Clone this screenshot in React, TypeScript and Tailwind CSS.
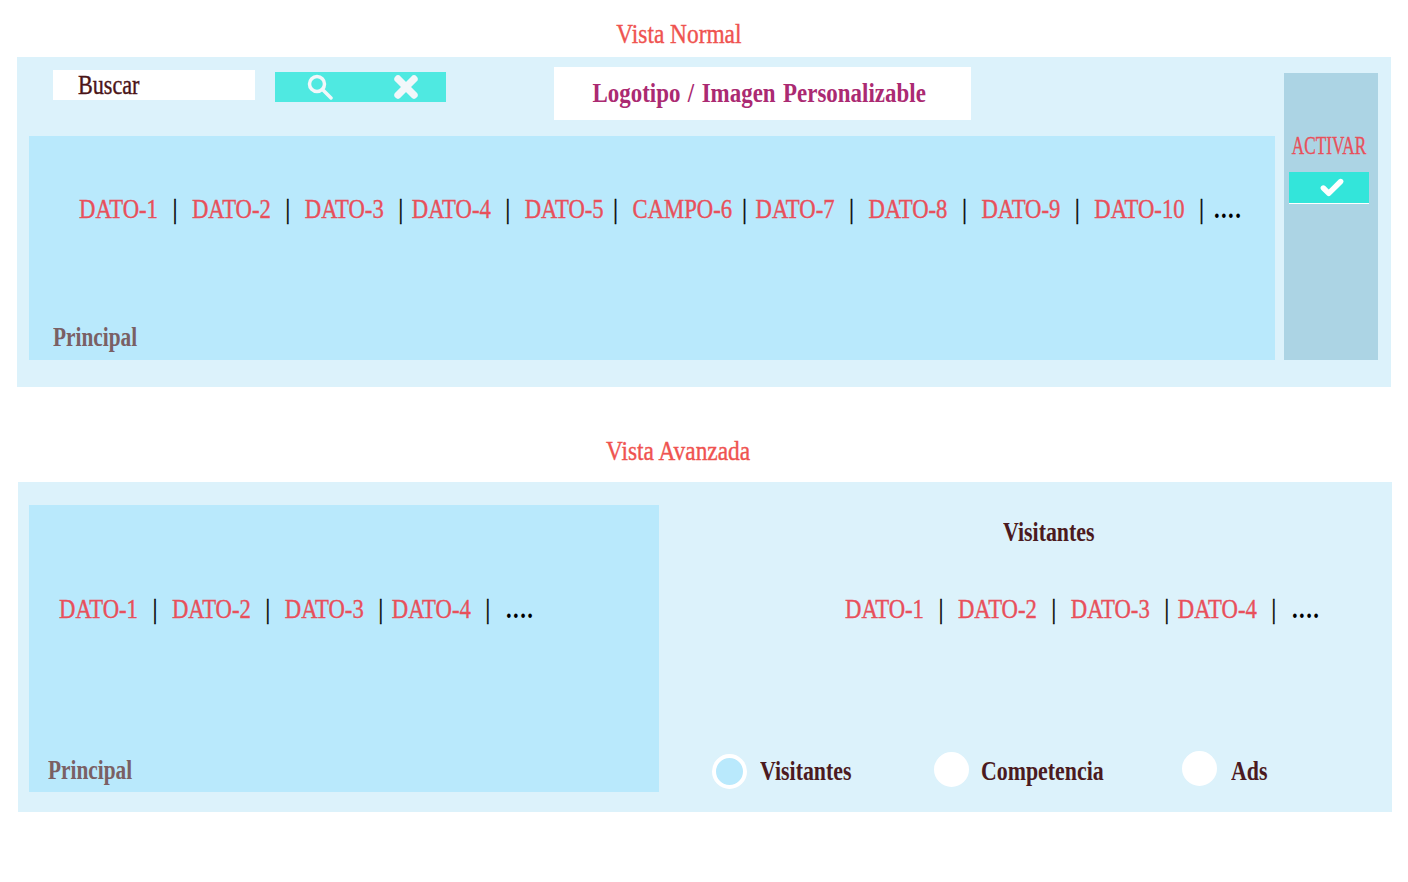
import { Check, X } from 'lucide-react';

const SERIF = "font-['Liberation_Serif',serif]";

type DataItem = [string, string, string];

function DataRow({ items, dotsGap, className }: { items: DataItem[]; dotsGap: string; className: string }) {
  return (
    <div className={`flex whitespace-nowrap text-[27px] leading-[32px] text-[#e8505b] [-webkit-text-stroke:0.4px_#e8505b] origin-left scale-x-[0.84] ${className}`}>
      {items.map(([label, before, after]) => (
        <span key={label} className="flex">
          {label}
          <span className={`text-black [-webkit-text-stroke:0.5px_#000] ${before} ${after}`}>|</span>
        </span>
      ))}
      <span className={`font-bold text-black [-webkit-text-stroke:0px] tracking-[1.7px] ${dotsGap}`}>....</span>
    </div>
  );
}

const wide = 'ml-[17.5px] mr-[17.5px]';
const narrow = 'ml-[17.5px] mr-[10.5px]';

const normalRow: DataItem[] = [
  ['DATO-1', wide, ''],
  ['DATO-2', wide, ''],
  ['DATO-3', narrow, ''],
  ['DATO-4', wide, ''],
  ['DATO-5', 'ml-[11.5px]', 'mr-[17.5px]'],
  ['CAMPO-6', 'ml-[12px]', 'mr-[10.5px]'],
  ['DATO-7', wide, ''],
  ['DATO-8', wide, ''],
  ['DATO-9', wide, ''],
  ['DATO-10', 'ml-[17.5px]', ''],
];

const shortRow: DataItem[] = [
  ['DATO-1', wide, ''],
  ['DATO-2', wide, ''],
  ['DATO-3', narrow, ''],
  ['DATO-4', 'ml-[17.5px]', ''],
];

function Radio({ label, selected, circle, textGap, className }: { label: string; selected?: boolean; circle: string; textGap: string; className: string }) {
  return (
    <div className={`flex items-center ${className}`}>
      <div className={`w-[35px] h-[35px] rounded-full border-[4px] border-white ${circle} ${selected ? 'bg-[#b9e9fc]' : 'bg-white'}`} />
      <div className={`${textGap} w-[100px] text-[27px] leading-[32px] font-bold text-[#4b1a20] whitespace-nowrap origin-left scale-x-[0.81]`}>{label}</div>
    </div>
  );
}

export default function App() {
  return (
    <div className={`${SERIF} w-[1408px] h-[882px] bg-white overflow-hidden`}>
      <div className="h-[57px] pt-[18px] pr-[58px] text-center whitespace-nowrap text-[27px] leading-[32px] text-[#ef5350] [-webkit-text-stroke:0.4px_#ef5350] scale-x-[0.865]">Vista Normal</div>

      <div className="ml-[17px] w-[1374px] h-[330px] bg-[#dcf2fb] flex pl-3 pt-[10px] gap-[9px]">
        <div className="w-[1246px]">
          <div className="h-[69px] flex items-start">
            <div className="ml-[24px] mt-[3px] w-[202px] h-[30px] bg-white pl-[25px]">
              <div className="w-[100px] text-[27px] leading-[30px] text-[#4b1518] [-webkit-text-stroke:0.4px_#4b1518] origin-left scale-x-[0.82]">Buscar</div>
            </div>
            <div className="ml-[20px] mt-[5px] w-[171px] h-[30px] bg-[#4fe9e1] flex items-center text-[#f2f7fa]">
              <svg width="26" height="26" viewBox="0 0 26 26" fill="none" stroke="currentColor" strokeWidth="3.5" strokeLinecap="round" className="ml-[32px] shrink-0">
                <circle cx="10" cy="10" r="7.5" />
                <path d="M15.5 15.5 L24 24" />
              </svg>
              <X size={32} strokeWidth={5.5} className="ml-[57px]" />
            </div>
            <div className="ml-[108px] w-[417px] h-[53px] bg-white flex items-center justify-center pr-[7px] pb-[2px]">
              <div className="whitespace-nowrap text-[27px] leading-[32px] font-bold text-[#ab2a72] [word-spacing:2px] scale-x-[0.85]">Logotipo / Imagen Personalizable</div>
            </div>
          </div>
          <div className="h-[224px] bg-[#b9e9fc] pl-[50px] pt-[57px] flex flex-col">
            <DataRow items={normalRow} dotsGap="ml-[12px]" className="w-[1400px]" />
            <div className="mt-[96px] -ml-[26px] w-[100px] text-[27px] leading-[32px] font-bold text-[#7a6064] whitespace-nowrap origin-left scale-x-[0.79]">Principal</div>
          </div>
        </div>
        <div className="mt-[6px] w-[94px] h-[287px] bg-[#acd4e4] flex flex-col items-center pt-[58px] pr-[4px]">
          <div className="whitespace-nowrap text-[25px] leading-[30px] text-[#e8505b] [-webkit-text-stroke:0.4px_#e8505b] scale-x-[0.69]">ACTIVAR</div>
          <div className="mt-[11px] w-[80px] h-[32px] bg-[#33e5da] border-b border-white flex items-center justify-center text-white pl-[6px]">
            <Check size={26} strokeWidth={5} />
          </div>
        </div>
      </div>

      <div className="h-[95px] pt-[48px] pr-[60px] text-center whitespace-nowrap text-[27px] leading-[32px] text-[#ef5350] [-webkit-text-stroke:0.4px_#ef5350] scale-x-[0.865]">Vista Avanzada</div>

      <div className="ml-[18px] w-[1374px] h-[330px] bg-[#dcf2fb] flex pl-[11px] pt-[23px]">
        <div className="w-[630px] h-[287px] bg-[#b9e9fc] pl-[30px] pt-[88px]">
          <DataRow items={shortRow} dotsGap="ml-[19px]" className="w-[700px]" />
          <div className="mt-[129px] -ml-[11px] w-[100px] text-[27px] leading-[32px] font-bold text-[#7a6064] whitespace-nowrap origin-left scale-x-[0.79]">Principal</div>
        </div>
        <div className="flex-1">
          <div className="pl-[186px]">
            <div className="ml-[158px] mt-[11px] w-[200px] text-[27px] leading-[32px] font-bold text-[#4b1a20] whitespace-nowrap origin-left scale-x-[0.81]">Visitantes</div>
            <DataRow items={shortRow} dotsGap="ml-[19px]" className="w-[700px] mt-[45px]" />
          </div>
          <div className="flex mt-[128px] pl-[53px]">
            <Radio label="Visitantes" selected circle="translate-y-[1px]" textGap="ml-[13px]" className="w-[222px]" />
            <Radio label="Competencia" circle="-translate-y-[1px]" textGap="ml-[12px]" className="w-[248px]" />
            <Radio label="Ads" circle="-translate-y-[2px]" textGap="ml-[14px]" className="" />
          </div>
        </div>
      </div>
    </div>
  );
}
